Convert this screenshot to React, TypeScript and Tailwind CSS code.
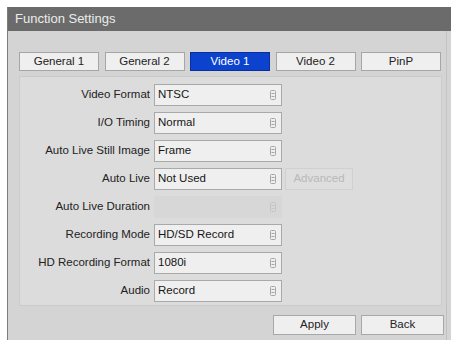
import React from 'react';

const TABS = ['General 1', 'General 2', 'Video 1', 'Video 2', 'PinP'];

type Row = {
  label: string;
  value: string;
  disabled?: boolean;
  advanced?: boolean;
};

const ROWS: Row[] = [
  { label: 'Video Format', value: 'NTSC' },
  { label: 'I/O Timing', value: 'Normal' },
  { label: 'Auto Live Still Image', value: 'Frame' },
  { label: 'Auto Live', value: 'Not Used', advanced: true },
  { label: 'Auto Live Duration', value: '', disabled: true },
  { label: 'Recording Mode', value: 'HD/SD Record' },
  { label: 'HD Recording Format', value: '1080i' },
  { label: 'Audio', value: 'Record' },
];

// tiny spinner glyph on the right of each select
function SpinIcon({ faded }: { faded?: boolean }) {
  const c = faded ? '#c4c4c4' : '#a6a6a6';
  return (
    <svg width="6" height="10" viewBox="0 0 6 10" className="shrink-0">
      <rect x="0.5" y="0.5" width="5" height="9" rx="1" fill="none" stroke={c} />
      <line x1="1.5" y1="3.5" x2="4.5" y2="3.5" stroke={c} />
      <line x1="1.5" y1="6.5" x2="4.5" y2="6.5" stroke={c} />
    </svg>
  );
}

function Select({ value, disabled }: { value: string; disabled?: boolean }) {
  return (
    <div
      className={`flex h-[22px] w-[128px] items-center justify-between ${
        disabled ? 'bg-[#d7d7d7] pl-[4px] pr-[6px]' : 'border border-[#a9a9a9] bg-[#efefef] pl-[3px] pr-[5px]'
      }`}
    >
      <span className="text-[#161616]">{value}</span>
      <SpinIcon faded={disabled} />
    </div>
  );
}

export default function App() {
  return (
    <div
      className="h-[340px] w-[451px] overflow-hidden bg-white pl-[7px] pt-[7px] text-[11.5px]"
      style={{ fontFamily: '"Liberation Sans", Arial, sans-serif' }}
    >
      <div className="flex h-[340px] w-[460px] flex-col border-l border-[#7c7c7c]">
        {/* title bar */}
        <div className="flex h-[24px] items-center bg-[#6b6b6b] pl-[7px] text-[13px] text-[#ececec]">
          Function Settings
        </div>

        {/* body */}
        <div className="flex flex-1 bg-[#d4d4d4]">
          <div className="flex w-[439px] flex-col border-r border-[#c2c2c2] pl-[11px] pt-[21px]">
            <div className="flex gap-[5.5px]">
              {TABS.map((t) => (
                <div
                  key={t}
                  className={`flex h-[19px] w-[80px] items-center justify-center border ${
                    t === 'Video 1'
                      ? 'border-[#0a2f9c] bg-[#0b43cf] text-white'
                      : 'border-[#a6a6a6] bg-[#efefef] text-[#222]'
                  }`}
                >
                  {t}
                </div>
              ))}
            </div>

            <div className="mt-[5px] flex w-[423px] flex-col gap-[6px] border border-[#cbcbcb] bg-[#dcdcdc] pb-[3px] pt-[7px]">
              {ROWS.map((r) => (
                <div key={r.label} className="flex items-center">
                  <div className="w-[134px] pr-[4px] text-right text-[#222]">{r.label}</div>
                  <Select value={r.value} disabled={r.disabled} />
                  {r.advanced && (
                    <div className="ml-[3px] flex h-[22px] w-[68px] items-center justify-center border border-[#d0d0d0] bg-[#dedede] text-[#b9b9b9]">
                      Advanced
                    </div>
                  )}
                </div>
              ))}
            </div>

            <div className="mt-[9px] flex w-[425px] justify-end gap-[5px]">
              {['Apply', 'Back'].map((b) => (
                <div
                  key={b}
                  className="flex h-[20px] w-[83px] items-center justify-center border border-[#a8a8a8] bg-[#efefef] text-[#222]"
                >
                  {b}
                </div>
              ))}
            </div>
          </div>
        </div>
      </div>
    </div>
  );
}
